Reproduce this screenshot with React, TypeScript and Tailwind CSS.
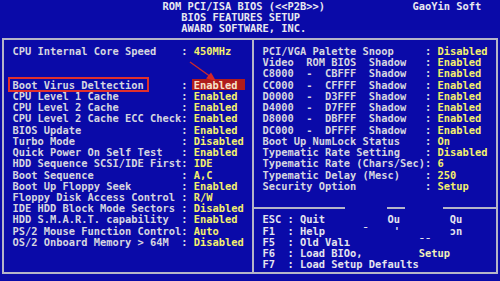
import React from "react";

type Row = [string, string] | null;

const leftRows: Row[] = [
  ["CPU Internal Core Speed", "450MHz"],
  null,
  null,
  ["Boot Virus Deltection", "Enabled"],
  ["CPU Level 1 Cache", "Enabled"],
  ["CPU Level 2 Cache", "Enabled"],
  ["CPU Level 2 Cache ECC Check", "Enabled"],
  ["BIOS Update", "Enabled"],
  ["Turbo Mode", "Disabled"],
  ["Quick Power On Self Test", "Enabled"],
  ["HDD Sequence SCSI/IDE First", "IDE"],
  ["Boot Sequence", "A,C"],
  ["Boot Up Floppy Seek", "Enabled"],
  ["Floppy Disk Access Control", "R/W"],
  ["IDE HDD Block Mode Sectors", "Disabled"],
  ["HDD S.M.A.R.T. capability", "Enabled"],
  ["PS/2 Mouse Function Control", "Auto"],
  ["OS/2 Onboard Memory > 64M", "Disabled"],
];

const rightRows: Row[] = [
  ["PCI/VGA Palette Snoop", "Disabled"],
  ["Video  ROM BIOS  Shadow", "Enabled"],
  ["C8000  -  CBFFF  Shadow", "Enabled"],
  ["CC000  -  CFFFF  Shadow", "Enabled"],
  ["D0000  -  D3FFF  Shadow", "Enabled"],
  ["D4000  -  D7FFF  Shadow", "Enabled"],
  ["D8000  -  DBFFF  Shadow", "Enabled"],
  ["DC000  -  DFFFF  Shadow", "Enabled"],
  ["Boot Up NumLock Status", "On"],
  ["Typematic Rate Setting", "Disabled"],
  ["Typematic Rate (Chars/Sec)", "6"],
  ["Typematic Delay (Mesc)", "250"],
  ["Security Option", "Setup"],
];

const rowCls = "flex h-[11.24px] leading-[13px] whitespace-pre";

function SettingRow({
  row,
  labelW,
  highlight,
}: {
  row: Row;
  labelW: string;
  highlight?: boolean;
}) {
  if (!row) return <div className={rowCls} />;
  return (
    <div className={rowCls}>
      <span className={`${labelW} shrink-0 text-[#d6d6e0]`}>{row[0]}</span>
      <span className="w-[12.5px] shrink-0 text-[#d6d6e0]">:</span>
      {highlight ? (
        <span className="-ml-[1.5px] inline-block w-[53px] bg-[#b01c1c] pl-[1.5px] text-[#f8e2cc]">
          {row[1]}
        </span>
      ) : (
        <span className="text-[#f4f06c]">{row[1]}</span>
      )}
    </div>
  );
}

export default function App() {
  return (
    <div className="relative h-[281px] w-[500px] overflow-hidden bg-[#0a0aa8] font-['DejaVu_Sans_Mono',monospace] text-[10.38px] font-bold text-[#e8e8f0]">
      {/* Header */}
      <div className={rowCls}>
        <span className="w-[412.5px] shrink-0 pl-[162.5px]">ROM PCI/ISA BIOS (&lt;&lt;P2B&gt;&gt;)</span>
        <span>GaoYin Soft</span>
      </div>
      <div className={`${rowCls} pl-[181.25px]`}>BIOS FEATURES SETUP</div>
      <div className={`${rowCls} pl-[181.25px]`}>AWARD SOFTWARE, INC.</div>

      {/* Main box */}
      <div className="ml-[2.1px] mt-[4.58px] flex h-[236.2px] w-[495.8px] border-2 border-[#b4b4c8]">
        <div className="w-[250px] shrink-0 border-r-2 border-[#b4b4c8] pl-[8.4px] pt-[4.66px]">
          {leftRows.map((r, i) => (
            <SettingRow key={i} row={r} labelW="w-[168.75px]" highlight={i === 3} />
          ))}
        </div>
        <div className="flex flex-1 flex-col pt-[4.66px]">
          <div className="pl-[8.4px]">
            {rightRows.map((r, i) => (
              <SettingRow key={i} row={r} labelW="w-[162.5px]" />
            ))}
            <div className={rowCls} />
          </div>
          {/* divider */}
          <div className="flex h-[11.24px] items-center">
            <div className="h-[2px] w-[91px] bg-[#b4b4c8]" />
            <div className="w-[42px]" />
            <div className="h-[2px] w-[18px] bg-[#b4b4c8]" />
            <div className="w-[38px]" />
            <div className="h-[2px] flex-1 bg-[#b4b4c8]" />
          </div>
          <div className="pl-[8.4px] text-[#e4e4ee]">
            <div className={rowCls}>{"ESC : Quit          Ou        Qu"}</div>
            <div className={rowCls}>{"F1  : Help      ¯    '        ɔn"}</div>
            <div className={rowCls}>{"F5  : Old Valı           ¯¯"}</div>
            <div className={rowCls}>
              {"F6  : Load BIOo,         "}
              <span className="text-[#f2f0b8]">Setup</span>
            </div>
            <div className={rowCls}>{"F7  : Load Setup Defaults"}</div>
          </div>
        </div>
      </div>

      {/* Annotation overlay */}
      <div className="absolute left-[8px] top-[77px] h-[14.5px] w-[141px] border-2 border-[#e0302c]" />
      <svg className="absolute left-0 top-0" width="500" height="281" viewBox="0 0 500 281">
        <line x1="190" y1="62" x2="211" y2="77" stroke="#cc2a2a" strokeWidth="1.4" />
        <polygon points="216,81 206,78.5 211,72.5" fill="#d42626" />
      </svg>
    </div>
  );
}
